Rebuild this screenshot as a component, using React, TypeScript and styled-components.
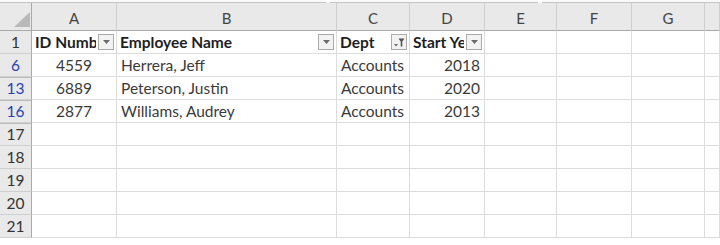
import React from 'react'
import styled, { createGlobalStyle } from 'styled-components'

const GlobalStyle = createGlobalStyle`
  html, body {
    margin: 0;
    padding: 0;
    background: #ffffff;
  }
  body {
    font-family: Lato, "Open Sans", "Liberation Sans", sans-serif;
  }
`

const columns = [
  { key: 'A', width: 85 },
  { key: 'B', width: 220 },
  { key: 'C', width: 73 },
  { key: 'D', width: 75 },
  { key: 'E', width: 72 },
  { key: 'F', width: 75 },
  { key: 'G', width: 73 },
]

type Row = {
  num: number
  filtered?: boolean
  hiddenBefore?: boolean
  cells?: (string | undefined)[]
}

const rows: Row[] = [
  { num: 6, filtered: true, cells: ['4559', 'Herrera, Jeff', 'Accounts', '2018'] },
  { num: 13, filtered: true, hiddenBefore: true, cells: ['6889', 'Peterson, Justin', 'Accounts', '2020'] },
  { num: 16, filtered: true, hiddenBefore: true, cells: ['2877', 'Williams, Audrey', 'Accounts', '2013'] },
  { num: 17, hiddenBefore: true },
  { num: 18 },
  { num: 19 },
  { num: 20 },
  { num: 21 },
]

const aligns: ('center' | 'left' | 'right')[] = ['center', 'left', 'left', 'right', 'left', 'left', 'left']

// header labels are clipped by the filter button, as in Excel
const headers = [
  { label: 'ID Number', filter: 'plain' },
  { label: 'Employee Name', filter: 'plain' },
  { label: 'Dept', filter: 'active' },
  { label: 'Start Year', filter: 'plain' },
]

const DropArrow = () => (
  <svg width="7" height="4" viewBox="0 0 7 4">
    <path d="M0 0 H7 L3.5 4 Z" fill="#6b6b6b" />
  </svg>
)

const FunnelArrow = () => (
  <svg width="11" height="9" viewBox="0 0 11 9">
    <path d="M0 6 H4 L2 8.5 Z" fill="#6b6b6b" />
    <path d="M4.5 0.5 H10.5 L8.3 3.5 V8.5 H6.7 V3.5 Z" fill="#555555" />
  </svg>
)

const App = () => {
  const template = `32px ${columns.map((c) => c.width + 'px').join(' ')} 1fr`

  return (
    <>
      <GlobalStyle />
      <TopStrip>
        <StripTab $width={330} />
        <StripTab $width={210} />
        <StripTab $width={180} />
      </TopStrip>
      <Sheet $template={template}>
        <Corner>
          <svg width="16" height="15" viewBox="0 0 16 15">
            <path d="M16 0 V15 H0 Z" fill="#b9b9b9" />
          </svg>
        </Corner>
        {columns.map((c) => (
          <ColHeader key={c.key}>{c.key}</ColHeader>
        ))}
        <ColHeader />

        <RowHeader>1</RowHeader>
        {columns.map((c, i) => {
          const h = headers[i]
          if (!h) return <Cell key={c.key} />
          return (
            <HeaderCell key={c.key}>
              <HeaderLabel>{h.label}</HeaderLabel>
              <FilterButton>{h.filter === 'active' ? <FunnelArrow /> : <DropArrow />}</FilterButton>
            </HeaderCell>
          )
        })}
        <Cell />

        {rows.map((r) => (
          <React.Fragment key={r.num}>
            <RowHeader $filtered={r.filtered} $hiddenBefore={r.hiddenBefore}>
              {r.num}
            </RowHeader>
            {columns.map((c, i) => (
              <Cell key={c.key} $align={aligns[i]}>
                {r.cells?.[i]}
              </Cell>
            ))}
            <Cell />
          </React.Fragment>
        ))}
      </Sheet>
    </>
  )
}

export default App

const TopStrip = styled.div`
  display: flex;
  gap: 4px;
  height: 3px;
  background: #ffffff;
`

const StripTab = styled.div<{ $width: number }>`
  width: ${(p) => p.$width}px;
  height: 2px;
  border-bottom: 1px solid #c4c4c4;
  background: #fafafa;
`

const Sheet = styled.div<{ $template: string }>`
  display: grid;
  grid-template-columns: ${(p) => p.$template};
  grid-template-rows: 28px repeat(9, 23px);
  width: 720px;
  overflow: hidden;
  font-size: 15.5px;
`

const Corner = styled.div`
  background: #e9e9e9;
  border-right: 1px solid #a9a9a9;
  border-bottom: 1px solid #a9a9a9;
  display: flex;
  align-items: flex-end;
  justify-content: flex-end;
  padding: 0 1px 3px 0;
`

const ColHeader = styled.div`
  background: #e9e9e9;
  border-right: 1px solid #cfcfcf;
  border-bottom: 1px solid #a9a9a9;
  color: #444444;
  font-size: 15px;
  display: flex;
  align-items: flex-end;
  justify-content: center;
  padding-bottom: 3px;
  white-space: nowrap;
`

const RowHeader = styled.div<{ $filtered?: boolean; $hiddenBefore?: boolean }>`
  background: #e9e9e9;
  border-right: 1px solid #a9a9a9;
  border-bottom: 1px solid #cfcfcf;
  box-shadow: ${(p) => (p.$hiddenBefore ? 'inset 0 1px 0 #bdbdbd' : 'none')};
  color: ${(p) => (p.$filtered ? '#2b3fb8' : '#333333')};
  font-size: 15.5px;
  display: flex;
  align-items: center;
  justify-content: center;
`

const Cell = styled.div<{ $align?: 'left' | 'center' | 'right' }>`
  border-right: 1px solid #dcdcdc;
  border-bottom: 1px solid #dcdcdc;
  color: #3a3a3a;
  display: flex;
  align-items: center;
  justify-content: ${(p) =>
    p.$align === 'center' ? 'center' : p.$align === 'right' ? 'flex-end' : 'flex-start'};
  padding: 0 4px 0 4px;
  white-space: nowrap;
  overflow: hidden;
`

const HeaderCell = styled.div`
  border-right: 1px solid #dcdcdc;
  border-bottom: 1px solid #dcdcdc;
  display: flex;
  align-items: center;
  padding: 0 2px 0 3px;
  overflow: hidden;
`

const HeaderLabel = styled.span`
  flex: 1;
  min-width: 0;
  overflow: hidden;
  white-space: nowrap;
  font-weight: 700;
  color: #1e1e1e;
`

const FilterButton = styled.div`
  flex: none;
  width: 14px;
  height: 14px;
  margin-left: 2px;
  border: 1px solid #ababab;
  background: #f2f2f2;
  display: flex;
  align-items: center;
  justify-content: center;
`
